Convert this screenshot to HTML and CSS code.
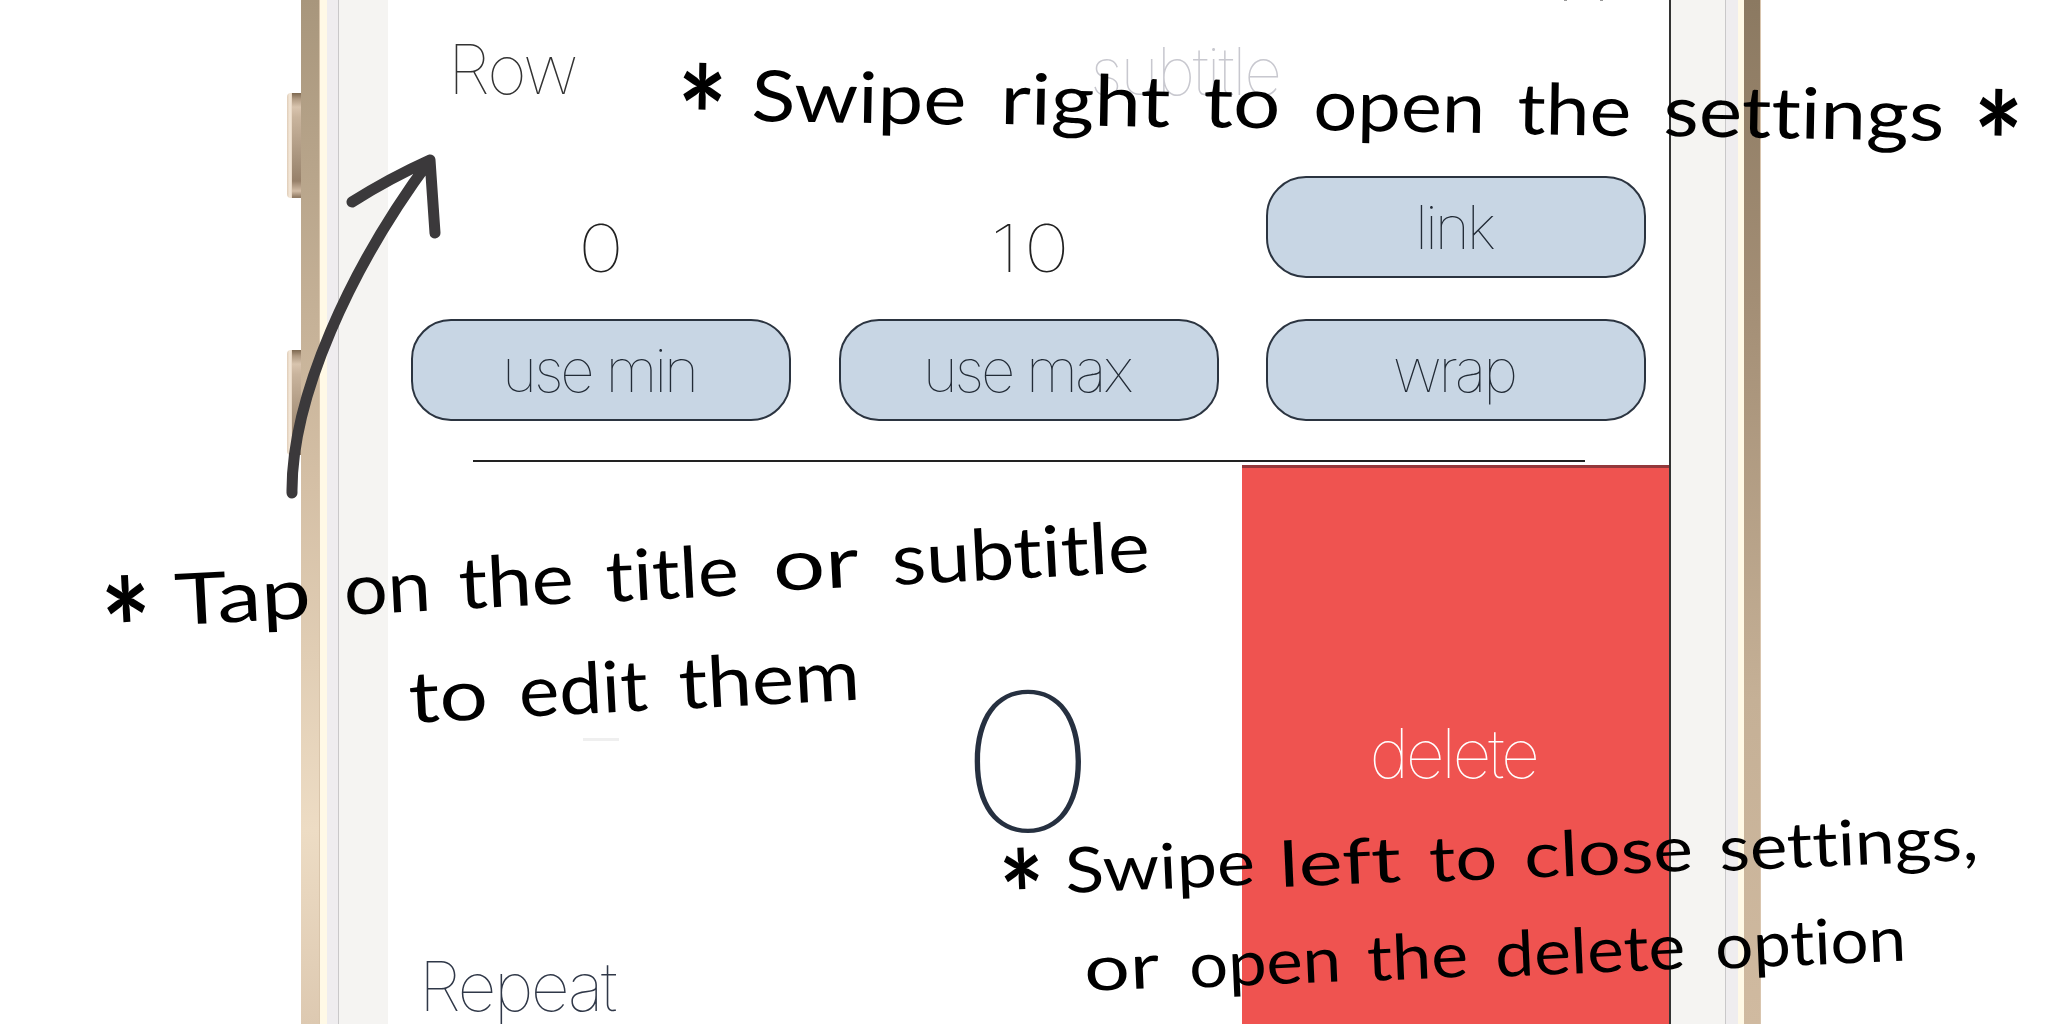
FILE: index.html
```html
<!DOCTYPE html>
<html lang="en">
<head>
<meta charset="utf-8">
<title>Counter settings guide</title>
<link rel="stylesheet" href="styles.css">
</head>
<body>
<main class="stage">
  <div class="phone">
    <div class="keys"><span class="key"></span><span class="key"></span></div>
    <div class="gold gold-left"></div>
    <div class="cream"></div>
    <div class="rim rim-left"></div>
    <div class="bezel bezel-left"></div>
    <section class="screen">
      <div class="clipped"><i></i><i></i></div>
      <header class="heading">
        <span class="title">Row</span>
        <span class="subtitle">subtitle</span>
      </header>
      <div class="controls">
        <span class="value">0</span>
        <span class="value ten">10</span>
        <button class="pill link">link</button>
        <button class="pill">use min</button>
        <button class="pill max">use max</button>
        <button class="pill wrap">wrap</button>
      </div>
      <hr class="divider">
      <div class="lower">
        <div class="counter">
          <span class="minus"></span>
          <span class="count">0</span>
          <span class="repeat">Repeat</span>
        </div>
        <div class="delete"><span>delete</span></div>
      </div>
    </section>
    <div class="bezel bezel-right"></div>
    <div class="rim rim-right"></div>
    <div class="cream cream-right"></div>
    <div class="gold gold-right"></div>
  </div>

  <svg class="notes" viewBox="0 0 2048 1024" width="2048" height="1024">
    <path class="arrow" d="M292 493C291 398 350 268 430 160M352 202Q390 178 430 160L435 233"/>
    <g class="big">
      <text class="star" transform="translate(676 167) rotate(1)" textLength="50" lengthAdjust="spacingAndGlyphs">*</text>
      <text transform="translate(751 121) rotate(1)" textLength="215" lengthAdjust="spacingAndGlyphs">Swipe</text>
      <text transform="translate(1000 124) rotate(1)" textLength="170" lengthAdjust="spacingAndGlyphs">right</text>
      <text transform="translate(1203 127) rotate(1)" textLength="77" lengthAdjust="spacingAndGlyphs">to</text>
      <text transform="translate(1313 130) rotate(1)" textLength="172" lengthAdjust="spacingAndGlyphs">open</text>
      <text transform="translate(1517 134) rotate(1)" textLength="114" lengthAdjust="spacingAndGlyphs">the</text>
      <text transform="translate(1663 136) rotate(1)" textLength="281" lengthAdjust="spacingAndGlyphs">settings</text>
      <text class="star" transform="translate(1972 193) rotate(1)" textLength="50" lengthAdjust="spacingAndGlyphs">*</text>

      <text class="star" transform="translate(105 681) rotate(-3)" textLength="50" lengthAdjust="spacingAndGlyphs">*</text>
      <text transform="translate(176 625) rotate(-3)" textLength="136" lengthAdjust="spacingAndGlyphs">Tap</text>
      <text transform="translate(345 615) rotate(-3)" textLength="87" lengthAdjust="spacingAndGlyphs">on</text>
      <text transform="translate(460 609) rotate(-3)" textLength="115" lengthAdjust="spacingAndGlyphs">the</text>
      <text transform="translate(607 602) rotate(-3)" textLength="133" lengthAdjust="spacingAndGlyphs">title</text>
      <text transform="translate(774 591) rotate(-3)" textLength="86" lengthAdjust="spacingAndGlyphs">or</text>
      <text transform="translate(893 585) rotate(-3)" textLength="258" lengthAdjust="spacingAndGlyphs">subtitle</text>
      <text transform="translate(410 723) rotate(-3)" textLength="79" lengthAdjust="spacingAndGlyphs">to</text>
      <text transform="translate(520 717) rotate(-3)" textLength="129" lengthAdjust="spacingAndGlyphs">edit</text>
      <text transform="translate(680 709) rotate(-3)" textLength="181" lengthAdjust="spacingAndGlyphs">them</text>
    </g>
    <g class="small">
      <text class="star" transform="translate(1002 941) rotate(-2.5)" textLength="45" lengthAdjust="spacingAndGlyphs">*</text>
      <text transform="translate(1066 893) rotate(-2.5)" textLength="190" lengthAdjust="spacingAndGlyphs">Swipe</text>
      <text transform="translate(1280 887) rotate(-2.5)" textLength="122" lengthAdjust="spacingAndGlyphs">left</text>
      <text transform="translate(1430 882) rotate(-2.5)" textLength="68" lengthAdjust="spacingAndGlyphs">to</text>
      <text transform="translate(1525 878) rotate(-2.5)" textLength="169" lengthAdjust="spacingAndGlyphs">close</text>
      <text transform="translate(1720 871) rotate(-2.5)" textLength="259" lengthAdjust="spacingAndGlyphs">settings,</text>
      <text transform="translate(1085 991) rotate(-2.5)" textLength="75" lengthAdjust="spacingAndGlyphs">or</text>
      <text transform="translate(1190 988) rotate(-2.5)" textLength="152" lengthAdjust="spacingAndGlyphs">open</text>
      <text transform="translate(1368 981) rotate(-2.5)" textLength="101" lengthAdjust="spacingAndGlyphs">the</text>
      <text transform="translate(1496 977) rotate(-2.5)" textLength="190" lengthAdjust="spacingAndGlyphs">delete</text>
      <text transform="translate(1716 969) rotate(-2.5)" textLength="191" lengthAdjust="spacingAndGlyphs">option</text>
    </g>
  </svg>
</main>
</body>
</html>
```
FILE: styles.css
```css
* { box-sizing: border-box; }
body { margin: 0; background: #fff; font-family: Inter, "Liberation Sans", sans-serif; font-weight: 100; }
.stage { position: relative; width: 2048px; height: 1024px; overflow: hidden; }
.phone { display: flex; height: 1024px; padding-left: 287px; }

.keys { width: 14px; padding-top: 93px; display: flex; flex-direction: column; gap: 152px; }
.key {
  height: 105px;
  border-radius: 4px 0 0 4px;
  background:
    linear-gradient(90deg, #e0cdb8 0, #f5e9da 3px, #e6d5c2 5px, transparent 5px),
    linear-gradient(#7d6850 0, #b09a82 6px, #d8c4ae 14px, #c9b49d 24px, #a18c75 75px, #978069 88px, #d2bca5 98px, #927c65 104px);
}
.gold { flex: none; }
.gold-left { width: 19px; background: linear-gradient(#a8967c 0, #d4bfa5 480px, #eddcc4 830px, #ddc9b1 1024px); border-right: 1px solid #d9c5ab; }
.gold-right { width: 17px; background: linear-gradient(#8b7961 0, #a38e75 300px, #c5b096 700px, #d0baa0 1024px); border-right: 1px solid #d9c5ae; }
.cream { flex: none; width: 7px; background: #fff9e6; }
.cream-right { width: 6px; }
.rim { flex: none; width: 12px; background: #efedef; }
.rim-left { border-right: 1px solid #c9c8c9; }
.rim-right { width: 13px; border-left: 1px solid #c9c8c9; }
.bezel { flex: none; background: #f5f4f2; }
.bezel-left { width: 49px; }
.bezel-right { width: 54px; }

.screen { flex: none; width: 1283px; border-right: 2px solid #333; background: #fff; }
.clipped { height: 2px; display: flex; gap: 33px; padding-left: 1176px; }
.clipped i { width: 3px; height: 1px; background: #999; }
.heading { height: 174px; display: flex; padding: 0 0 0 60px; line-height: 134px; font-size: 68px; }
.title { width: 642px; color: #333; letter-spacing: -2px; }
.subtitle { color: #c8c8cf; font-size: 66px; letter-spacing: -2.2px; line-height: 138px; }

.controls { display: grid; grid-template-columns: repeat(3, 380px); grid-template-rows: 102px 102px; gap: 41px 47.5px; padding-left: 23px; }
.value { text-align: center; font-size: 66px; line-height: 144px; color: #222; height: 102px; transform: scaleX(1.18); }
.ten { letter-spacing: 4px; padding-left: 6px; }
.pill {
  height: 102px; padding: 0 4px 0 0; border: 2px solid #2b3440; border-radius: 40px;
  background: #c8d6e4; color: #222b36; font: 100 60px/98px Inter, sans-serif; letter-spacing: -3.1px; text-align: center;
}
.divider { width: 1112px; height: 2px; margin: 39px 0 3px 85px; border: 0; background: #222; }

.lower { display: flex; height: 559px; }
.counter { width: 854px; display: grid; grid-template-columns: 195px 36px 1fr; grid-template-rows: 472px 87px; }
.minus { grid-column: 2; margin-top: 273px; height: 3px; background: #efefef; }
.count { grid-column: 3; justify-self: start; margin-left: 352px; font-size: 192px; line-height: 592px; height: 472px; color: #263040; transform: scaleX(1.24); }
.repeat { grid-column: 1 / 4; padding-left: 31px; font-size: 68px; line-height: 98px; letter-spacing: -2.6px; color: #303848; }
.delete { width: 427px; padding-right: 5px; border-top: 3px solid #93383b; background: #ef5350; color: #fff; text-align: center; font-size: 68px; line-height: 570px; letter-spacing: -3.3px; }

.notes { position: absolute; left: 0; top: 0; font-family: Lato, sans-serif; font-weight: 400; font-variant-ligatures: none; }
.arrow { fill: none; stroke: #3b393b; stroke-width: 11; stroke-linecap: round; stroke-linejoin: round; }
.big { font-size: 71px; }
.small { font-size: 63px; }
.star { font-size: 138px; font-weight: 700; }
.small .star { font-size: 122px; }
```
